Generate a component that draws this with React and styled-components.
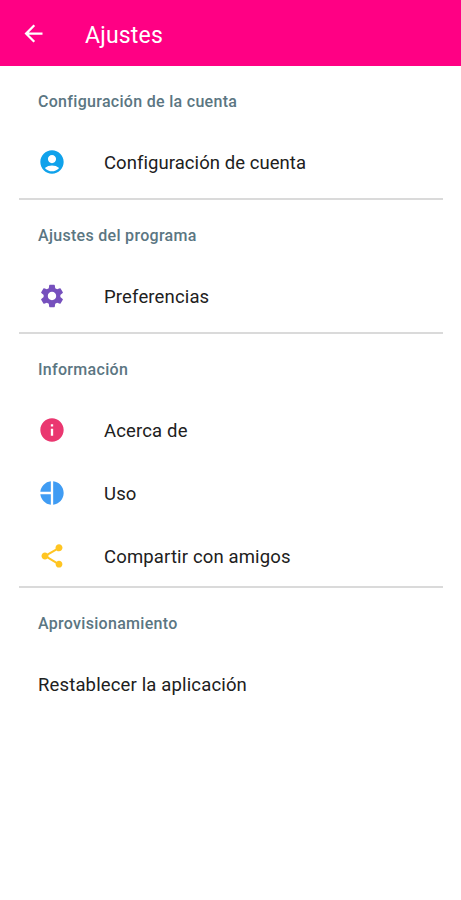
import React from 'react';
import styled, { createGlobalStyle } from 'styled-components';
import { MdArrowBack, MdAccountCircle, MdSettings, MdInfo, MdShare } from 'react-icons/md';

const GlobalStyle = createGlobalStyle`
  * { box-sizing: border-box; }
  body { margin: 0; background: #fff; font-family: Roboto, sans-serif; }
`;
const Screen = styled.main`
  min-height: 900px;
  background: #fff;
`;
const AppBar = styled.header`
  display: flex;
  align-items: center;
  height: 66px;
  padding: 2px 20px 0;
  background: #ff0084;
  color: #fff;
`;
const BackButton = styled.button`
  display: flex;
  padding: 0;
  margin: 0 38px 2px 0;
  border: 0;
  background: none;
  color: inherit;
  font-size: 27px;
`;
const Title = styled.h1`
  margin: 3px 0 0;
  font-size: 23px;
  font-weight: 400;
  line-height: 30px;
  letter-spacing: 0.2px;
`;
const Section = styled.section`
  height: ${(p) => p.$height}px;
  margin: 0 18px 0 19px;
  padding: 26px 0 0 19px;
  border-bottom: ${(p) => (p.$last ? '0' : '2px solid #dadada')};
`;
const Heading = styled.h2`
  margin: 0 0 20px;
  color: #5b7682;
  font-size: 16px;
  font-weight: 500;
  line-height: 20px;
  letter-spacing: 0.3px;
`;
const Row = styled.div`
  display: flex;
  align-items: center;
  height: 62.7px;
`;
const IconSlot = styled.span`
  display: flex;
  width: 66px;
  margin-top: -2px;
  color: ${(p) => p.$color};
  font-size: 28px;
`;
const Label = styled.span`
  color: #202020;
  font-size: 18.5px;
  line-height: 24px;
  letter-spacing: ${(p) => p.$spacing ?? 0.15}px;
`;
const UsageIcon = () => (
  <svg width="28" height="28" viewBox="0 0 24 24" fill="currentColor">
    <path d="M11 2v9H2c.5-4.700 4.300-8.500 9-9zM11 13v9c-4.700-.5-8.500-4.300-9-9zM13 2v20c5.100-.5 9-4.800 9-10s-3.900-9.500-9-10z" />
  </svg>
);

export default function App() {
  return (
    <>
      <GlobalStyle />
      <Screen>
        <AppBar><BackButton aria-label="Volver"><MdArrowBack /></BackButton><Title>Ajustes</Title></AppBar>
        <Section $height={134}>
          <Heading>Configuración de la cuenta</Heading>
          <Row><IconSlot $color="#10a2eb"><MdAccountCircle /></IconSlot><Label $spacing={0.06}>Configuración de cuenta</Label></Row>
        </Section>
        <Section $height={134}>
          <Heading>Ajustes del programa</Heading>
          <Row><IconSlot $color="#7650bd"><MdSettings /></IconSlot><Label>Preferencias</Label></Row>
        </Section>
        <Section $height={254}>
          <Heading>Información</Heading>
          <Row><IconSlot $color="#ea3770"><MdInfo /></IconSlot><Label>Acerca de</Label></Row>
          <Row><IconSlot $color="#409cf3"><UsageIcon /></IconSlot><Label>Uso</Label></Row>
          <Row><IconSlot $color="#ffc522"><MdShare /></IconSlot><Label>Compartir con amigos</Label></Row>
        </Section>
        <Section $height={140} $last>
          <Heading>Aprovisionamiento</Heading>
          <Row><Label>Restablecer la aplicación</Label></Row>
        </Section>
      </Screen>
    </>
  );
}
